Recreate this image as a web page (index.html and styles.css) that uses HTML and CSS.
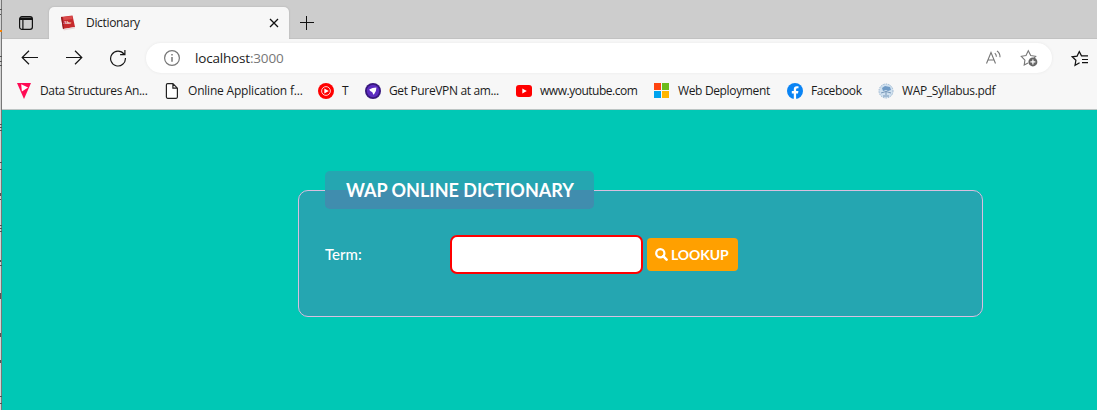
FILE: index.html
```
<!DOCTYPE html>
<html lang="en">
<head>
<meta charset="utf-8">
<title>Dictionary</title>
<link rel="stylesheet" href="styles.css">
</head>
<body>
<div class="screen">
  <svg class="edge" width="2" height="410" viewBox="0 0 2 410" shape-rendering="crispEdges">
    <path fill="#d4d4d4" d="M0 0h1v410H0z"/><path fill="#777" d="M1 0h1v410H1z"/>
    <path fill="#f78100" d="M0 30h2v2H0z"/>
    <path fill="#555" d="M0 9h2v1H0zM0 14h1v1H0zM0 56h2v1H0zM0 61h2v1H0zM0 65h2v1H0zM0 124h2v1H0zM0 127h2v1H0zM0 130h2v1H0zM0 162h2v1H0zM0 169h2v1H0zM0 193h1v3H0zM0 199h1v1H0zM0 225h2v1H0zM0 228h2v1H0zM0 231h2v1H0zM0 260h1v2H0zM0 265h2v1H0zM0 293h1v6H0zM0 333h1v4H0zM0 360h1v3H0zM0 396h2v1H0zM0 403h2v1H0z"/>
  </svg>
  <div class="browser">
    <div class="tabs">
      <svg class="tab-menu" width="16" height="16" viewBox="0 0 16 16" fill="none" stroke="#111" stroke-width="1.2"><rect x="1.6" y="1.6" width="12.8" height="12.8" rx="2.4"/><path d="M2 3.2h12M1.6 4.4h12.8M4.9 5v9"/></svg>
      <div class="tab">
        <svg width="16" height="16" viewBox="0 0 16 16"><path fill="#c62a2d" d="M1 2 12.5.5 15 12 3 14z"/><path fill="#8a1a1d" d="M1 2 3 14l1-.2L2.2 1.8z"/><path fill="#e8dada" d="m3 14 12-2v1.6L4 15.4z"/><path fill="#d94a4a" d="m3 2 9-1 .6 3-9 1.2z"/><text class="book-text" x="3.6" y="8.6">Abc</text></svg>
        <span class="tab-title">Dictionary</span>
        <svg width="10" height="10" viewBox="0 0 10 10" stroke="#111" stroke-width="1.3"><path d="m1 1 8 8M9 1 1 9"/></svg>
      </div>
      <svg class="new-tab" width="14" height="14" viewBox="0 0 14 14" stroke="#111" stroke-width="1.1" shape-rendering="crispEdges"><path d="M6.5 0v14M0 6.5h14"/></svg>
    </div>
    <div class="toolbar">
      <svg class="nav" width="18" height="16" viewBox="0 0 18 16"><path d="M17 7.5H1.2M8 .8 1.2 7.5 8 14.2"/></svg>
      <svg class="nav" width="18" height="16" viewBox="0 0 18 16"><path d="M1 7.5h15.8M10 .8l6.8 6.7L10 14.2"/></svg>
      <svg class="nav" width="18" height="18" viewBox="0 0 18 18"><path d="M15 5.2A7.4 7.4 0 1 0 16.4 9M15.9 1v4.7h-4.8"/></svg>
      <div class="address">
        <svg width="18" height="18" viewBox="0 0 18 18" fill="none" stroke="#777" stroke-width="1.2"><circle cx="9" cy="9" r="7.4"/><path d="M9 8v4.7M9 5v1.5" stroke-width="1.5"/></svg>
        <span class="url">localhost<span class="port">:3000</span></span>
        <svg class="read" width="17" height="16" viewBox="0 0 17 16" fill="none" stroke="#777" stroke-width="1.1"><path d="M1.5 13.5 6 2.5l4.5 11M3 10h6M9.8 3.2q1.6 1.4 1.6 3.6M12 1q3.2 2.2 3 6.2"/></svg>
        <svg class="fav" width="18" height="18" viewBox="0 0 18 18"><path fill="none" stroke="#777" stroke-width="1.1" d="M8 14 4.2 16.1l.7-5L1.3 7.3l4.7-.7L8.3 1.8l2.4 4.8 5 .7-2.2 2.4"/><circle cx="12.9" cy="12.9" r="4.5" fill="#666"/><path stroke="#fff" stroke-width="1.2" d="M12.9 10.4v5M10.4 12.9h5"/></svg>
      </div>
      <svg class="favorites" width="18" height="17" viewBox="0 0 18 17" fill="none" stroke="#111" stroke-width="1.2"><path d="M8.6 12.8 4 15.3l.9-5L1.2 6.8l4.9-.7L8.3 1.6l2.2 4.2H17M11 9.5h6M11 12.7h6"/></svg>
    </div>
    <div class="bookmarks">
      <div class="bookmark w148"><svg width="16" height="16" viewBox="0 0 16 16"><path fill="#ff0a54" d="M1 0h14L8 16z"/><path fill="#fff" d="m5.2 1.2 6.9 3.2-6.2 4z"/></svg><span class="label structures">Data Structures An...</span></div>
      <div class="bookmark w154"><svg width="16" height="16" viewBox="0 0 16 16"><path fill="#fff" stroke="#222" stroke-width="1.2" d="M3.6.7h5.3l4.5 4.5v8.9q0 1.2-1.2 1.2H3.6q-1.2 0-1.2-1.2V1.9Q2.4.7 3.6.7zM8.9.7v4.5h4.5"/></svg><span class="label application">Online Application f...</span></div>
      <div class="bookmark w47"><svg width="16" height="16" viewBox="0 0 16 16"><circle cx="8" cy="8" r="8" fill="#f00"/><circle cx="8" cy="8" r="4.4" fill="none" stroke="#fff" stroke-width=".8"/><path fill="#fff" d="m6.3 5.4 4.5 2.6-4.5 2.6z"/></svg><span class="label">T</span></div>
      <div class="bookmark w151"><svg width="16" height="16" viewBox="0 0 16 16"><circle cx="8" cy="8" r="8" fill="#37177c"/><circle cx="8" cy="8" r="6.2" fill="#5c2bc0"/><path fill="#fff" d="M4.2 6.6q3.2-2 7.2-2 .2 4-2.6 7.2-.9-.4-1.2-2-.3-1-1.6-1.4-1.5-.6-1.8-1.8z"/></svg><span class="label vpn">Get PureVPN at am...</span></div>
      <div class="bookmark w138"><svg width="16" height="16" viewBox="0 0 16 16"><rect y="2" width="16" height="12" rx="3" fill="#f00"/><path fill="#fff" d="m6.3 5.5 4.5 2.5-4.5 2.5z"/></svg><span class="label youtube">www.youtube.com</span></div>
      <div class="bookmark w133"><svg width="16" height="16" viewBox="0 0 16 16" shape-rendering="crispEdges"><path fill="#ff4410" d="M0 0h7v7H0z"/><path fill="#6cbb1b" d="M8 0h7v7H8z"/><path fill="#00a3ee" d="M0 8h7v7H0z"/><path fill="#ffb500" d="M8 8h7v7H8z"/></svg><span class="label deployment">Web Deployment</span></div>
      <div class="bookmark w91"><svg width="16" height="16" viewBox="0 0 16 16"><circle cx="8" cy="8" r="8" fill="#0a84f4"/><path fill="#fff" d="M6.8 16v-5.6h-2V8h2V6.3q0-3.1 3-3.1l1.7.1v2h-1q-1.4 0-1.4 1.3V8h2.3l-.4 2.4H9.1V16z"/></svg><span class="label facebook">Facebook</span></div>
      <div class="bookmark"><svg width="16" height="16" viewBox="0 0 16 16"><circle cx="8" cy="8" r="7" fill="#cfe0ef" stroke="#9ab6d0" stroke-dasharray="1.5 1"/><path fill="#6f9ac5" d="M4 5 7 3l5 1 1 3-3 1-2-1-3 1z"/><path stroke="#7797b8" fill="none" d="M3 10q5-3 10 0M5 13h6M8 8v4"/></svg><span class="label syllabus">WAP_Syllabus.pdf</span></div>
    </div>
    <main class="page">
      <fieldset class="panel">
        <legend class="heading"><span class="heading-text">WAP ONLINE DICTIONARY</span></legend>
        <form class="search">
          <label class="term" for="term">Term:</label>
          <input class="term-input" id="term" type="text">
          <button class="lookup" type="button"><svg width="13" height="13" viewBox="0 0 13 13" fill="none" stroke="#fff"><circle cx="5.3" cy="5.3" r="4.1" stroke-width="2.2"/><path d="m8.2 8.2 3.4 3.4" stroke-width="2.6" stroke-linecap="round"/></svg><span class="lookup-text">LOOKUP</span></button>
        </form>
      </fieldset>
    </main>
  </div>
</div>
</body>
</html>
```
FILE: styles.css
```
* { box-sizing: border-box; }
body { margin: 0; overflow: hidden; font-family: "Open Sans", "Noto Sans", sans-serif; color: #1b1b1b; }
svg { display: block; flex: none; }
.screen { display: flex; width: 1097px; height: 410px; }
.edge { width: 2px; }
.browser { width: 1095px; display: flex; flex-direction: column; background: #f7f7f7; }

.tabs { height: 39px; display: flex; background: #cdcdcd; border-bottom: 1px solid #c2c2c2; }
.tab-menu { margin: 15px 15px 0 16px; }
.tab { width: 240px; height: 32px; margin-top: 7px; padding: 0 10px 0 11px; display: flex; align-items: center; background: #f7f7f7; border-radius: 5px 5px 0 0; box-shadow: 0 0 2px #aaa; clip-path: inset(-2px -2px 0 -2px); }
.tab-title { flex: 1; margin: -1px 0 0 10px; font-size: 12px; letter-spacing: -.33px; }
.new-tab { margin: 16px 0 0 11px; }
.book-text { font: bold 4.5px "Liberation Serif", serif; fill: #fff; }

.toolbar { height: 38px; display: flex; align-items: center; padding-left: 19px; }
.nav { margin-right: 26px; fill: none; stroke: #151515; stroke-width: 1.2; }
.address { width: 906px; height: 30px; margin-left: -7px; padding: 0 14px 0 17px; display: flex; align-items: center; background: #fff; border-radius: 15px; box-shadow: 0 0 3px #e7e7e7; }
.url { flex: 1; margin-left: 14px; font-size: 13.5px; letter-spacing: -.18px; }
.port { color: #777; }
.read { margin-right: 18px; }
.favorites { margin-left: 19px; }

.bookmarks { height: 33px; padding: 0 0 5px 14px; display: flex; align-items: center; border-bottom: 1px solid #bcc5c4; }
.bookmark { display: flex; align-items: center; gap: 8px; flex: none; }
.label { font-size: 12px; line-height: 16px; white-space: nowrap; }
.w148 { width: 148px; }
.w154 { width: 154px; }
.w47 { width: 47px; }
.w151 { width: 151px; }
.w138 { width: 138px; }
.w133 { width: 133px; }
.w91 { width: 91px; }
.structures, .vpn, .deployment, .facebook, .syllabus { letter-spacing: -.35px; }
.application { letter-spacing: -.2px; }
.youtube { letter-spacing: -.48px; }

.page { flex: 1; padding: 61px 0 0 296px; background: #00c8b5; }
.panel { width: 685px; height: 146px; margin: 0; padding: 0 26px; border: 1px solid #d8bfe0; border-radius: 10px; background: rgba(144, 69, 165, .26); }
.heading { width: 269px; height: 38px; padding: 0 21px; border-radius: 5px; background: rgba(144, 69, 165, .26); color: #fff; }
.heading-text { font: bold 18px/38px Lato, sans-serif; white-space: nowrap; }
.search { display: flex; align-items: center; height: 39px; margin-top: 26px; }
.term { width: 125px; padding-bottom: 2px; color: #fff; font: 500 15px Lato, sans-serif; }
.term-input { width: 193px; height: 39px; border: 2px solid #f00; border-radius: 7px; background: #fff; outline: none; }
.lookup { width: 91px; height: 33px; margin-left: 4px; padding: 0 0 0 8px; display: flex; align-items: center; gap: 3px; border: 0; border-radius: 4px; background: #ffa000; color: #fff; }
.lookup-text { padding-bottom: 1px; font: bold 14px Lato, sans-serif; letter-spacing: -.1px; }
```
